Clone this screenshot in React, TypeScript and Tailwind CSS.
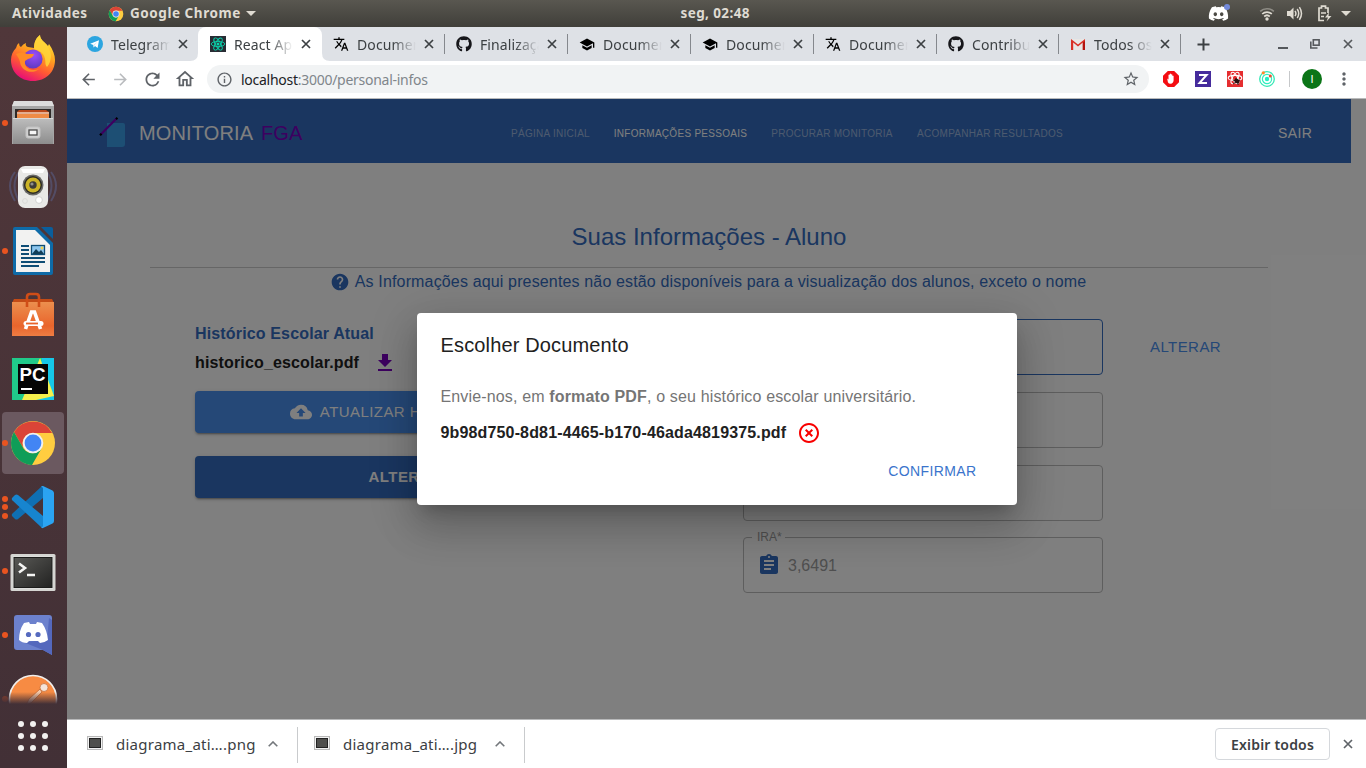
import React from "react";
import {
  MdTranslate,
  MdSchool,
  MdHelp,
  MdCloudUpload,
  MdAssignment,
  MdHighlightOff,
  MdArrowBack,
  MdArrowForward,
  MdRefresh,
  MdOutlineHome,
  MdStarBorder,
  MdOutlineInfo,
  MdMoreVert,
} from "react-icons/md";
import { FaGithub, FaDiscord } from "react-icons/fa";

const ui = "font-['Noto_Sans','Open_Sans',sans-serif]";

function ChromeLogo({ size }: { size: number }) {
  return (
    <svg width={size} height={size} viewBox="0 0 48 48" className="shrink-0">
      <circle cx="24" cy="24" r="22" fill="#ffcd40" />
      <path d="M5 13A22 22 0 0 1 43.1 14H24a11 11 0 0 0-9.5 15.5z" fill="#db4437" />
      <path d="M5 13a22 22 0 0 0 18 33l9.5-16.5a11 11 0 0 1-18 0z" fill="#0f9d58" />
      <circle cx="24" cy="24" r="10.3" fill="#f1f1f1" />
      <circle cx="24" cy="24" r="8.4" fill="#4285f4" />
    </svg>
  );
}

function TelegramIcon() {
  return (
    <svg width="16" height="16" viewBox="0 0 16 16">
      <circle cx="8" cy="8" r="8" fill="#2ca5e0" />
      <path d="M3.2 7.8 12 4.2 10.6 12 8 10.1 6.7 11.4 6.3 9.1z" fill="#fff" />
      <path d="M6.3 9.1 10.2 6 7.2 9.7 6.7 11.4z" fill="#c9e2f2" />
    </svg>
  );
}

function ReactIcon() {
  return (
    <svg width="16" height="16" viewBox="0 0 16 16">
      <rect width="16" height="16" fill="#282c34" />
      <g fill="none" stroke="#09d3ac" strokeWidth="0.9">
        <ellipse cx="8" cy="8" rx="6.8" ry="2.6" />
        <ellipse cx="8" cy="8" rx="6.8" ry="2.6" transform="rotate(60 8 8)" />
        <ellipse cx="8" cy="8" rx="6.8" ry="2.6" transform="rotate(120 8 8)" />
      </g>
      <circle cx="8" cy="8" r="1.5" fill="#09d3ac" />
    </svg>
  );
}

function GmailIcon() {
  return (
    <svg width="16" height="16" viewBox="0 0 16 16">
      <path d="M1 3h14v11H1z" fill="#e8e6e4" />
      <path d="M1 14V3l7 5.6L15 3v11h-2.2V6.6L8 10.4 3.2 6.6V14z" fill="#d93025" />
      <path d="M12.8 6.6 15 5v9h-2.2z" fill="#b3140f" />
    </svg>
  );
}

function Cross({ className }: { className: string }) {
  return (
    <svg width="10" height="10" viewBox="0 0 10 10" className={className}>
      <path d="M1 1l8 8M9 1L1 9" stroke="currentColor" strokeWidth="1.7" />
    </svg>
  );
}

const tabs = [
  { icon: <TelegramIcon />, label: "Telegram" },
  { icon: <ReactIcon />, label: "React App" },
  { icon: <MdTranslate size={16} color="#000" />, label: "Document" },
  { icon: <FaGithub size={16} color="#16161a" />, label: "Finalizaçã" },
  { icon: <MdSchool size={17} color="#000" />, label: "Document" },
  { icon: <MdSchool size={17} color="#000" />, label: "Document" },
  { icon: <MdTranslate size={16} color="#000" />, label: "Document" },
  { icon: <FaGithub size={16} color="#16161a" />, label: "Contribut" },
  { icon: <GmailIcon />, label: "Todos os" },
];

function TopBar() {
  return (
    <header className={`${ui} grid h-[27px] grid-cols-[1fr_auto_1fr] items-center bg-linear-to-b from-[#595750] to-[#403f3a] text-[13.5px] font-bold text-[#dfdbd2]`}>
      <div className="flex items-center pl-3">
        <span className="w-[96px] tracking-[0.45px]">Atividades</span>
        <ChromeLogo size={16} />
        <span className="ml-[6px] w-[112px] whitespace-nowrap tracking-[0.55px]">Google Chrome</span>
        <svg width="10" height="5" viewBox="0 0 10 5" className="ml-1">
          <path d="M0 0h10L5 5z" fill="#dfdbd2" />
        </svg>
      </div>
      <span className="ml-[66px] w-[71px] whitespace-nowrap tracking-[0.4px]">seg, 02:48</span>
      <div className="flex items-center justify-end pr-[15px]">
        <span className="relative mr-[30px] flex h-5 w-[21px] items-center">
          <FaDiscord size={21} color="#fff" />
          <span className="absolute -right-[1px] top-0 size-[6px] rounded-full bg-[#7289da]" />
        </span>
        <svg width="16" height="14" viewBox="0 0 16 14" className="mr-3" fill="none" strokeWidth="1.7">
          <path d="M1.2 4.4a10 10 0 0 1 13.6 0" stroke="#8f8d86" />
          <path d="M3.2 7a7 7 0 0 1 9.6 0M5.2 9.5a4.2 4.2 0 0 1 5.6 0" stroke="#dfdbd2" />
          <circle cx="8" cy="12" r="1.7" fill="#dfdbd2" />
        </svg>
        <svg width="17" height="15" viewBox="0 0 17 15" className="mr-[13px]" fill="none" stroke="#dfdbd2" strokeWidth="1.5">
          <path d="M0 5h3l3.5-3.5v12L3 10H0z" fill="#dfdbd2" stroke="none" />
          <path d="M8 4.8q1.8 2.7 0 5.4M10.2 3q3 4.5 0 9M12.4 1.2q4.2 6.3 0 12.6" />
        </svg>
        <svg width="15" height="17" viewBox="0 0 15 17" className="mr-[9px]" fill="none" stroke="#dfdbd2" strokeWidth="1.7">
          <path d="M7 15.5H2V3h2.5V1.2h4V3H11v5" />
          <path d="M4 8h5M4 11.5h3" />
          <path d="M12 7.5l-4 5h3l-1.5 4 5-5.5h-3z" fill="#dfdbd2" stroke="none" />
        </svg>
        <svg width="10" height="5" viewBox="0 0 10 5">
          <path d="M0 0h10L5 5z" fill="#dfdbd2" />
        </svg>
      </div>
    </header>
  );
}

function Firefox() {
  return (
    <svg width="48" height="48" viewBox="0 0 48 48">
      <defs>
        <linearGradient id="ffBody" x1="0.75" y1="0.05" x2="0.3" y2="1">
          <stop offset="0" stopColor="#ffe83a" />
          <stop offset="0.35" stopColor="#ffa31f" />
          <stop offset="0.65" stopColor="#ff5a33" />
          <stop offset="1" stopColor="#e6087c" />
        </linearGradient>
        <radialGradient id="ffGlobe" cx="0.55" cy="0.3" r="0.7">
          <stop offset="0" stopColor="#9a4dfa" />
          <stop offset="1" stopColor="#5f3ac0" />
        </radialGradient>
      </defs>
      <path d="M7 13q1-4 3-5 0 3 2 4 2-3 5-4-1 3 2 4l6 1C25 7 27 3 31 0c0 5 5 7 8 11l1-2c4 6 6 11 6 16 0 12-9 21-22 21S2 37 2 25c0-5 2-9 5-12z" fill="url(#ffBody)" />
      <path d="M31 0c0 5 5 7 8 12 4 6 4 14-1 20-3-3 0-7-4-13-3-4-9-4-9-6 0-5 2-10 6-13z" fill="#ffd53a" opacity="0.85" />
      <circle cx="24" cy="24" r="9.6" fill="url(#ffGlobe)" />
      <path d="M7 19q6-3 11 0h7q-1 4-6 5l-3 2c-1 7 6 11 14 8-7 6-18 2-19-7-1-4-3-6-4-8z" fill="#ff8b25" />
    </svg>
  );
}

function Files() {
  return (
    <svg width="46" height="48" viewBox="0 0 46 48">
      <defs>
        <linearGradient id="cab" x1="0" y1="0" x2="0" y2="1">
          <stop offset="0" stopColor="#bdbdbd" />
          <stop offset="1" stopColor="#8d8d8d" />
        </linearGradient>
      </defs>
      <path d="M4 2h38l2 5v38H2V7z" fill="#a5a5a5" />
      <path d="M4 2h38l2 5H2z" fill="#dcdcdc" />
      <rect x="5" y="10" width="36" height="9" fill="#2e2a28" />
      <path d="M7 13l2-2h27l3 2v6H7z" fill="#b8481c" />
      <path d="M7 15h32v4H7z" fill="#ee8b46" />
      <path d="M7 14h32" stroke="#fbe7d2" strokeWidth="1.3" />
      <path d="M3 19h40v26H3z" fill="url(#cab)" />
      <path d="M3 19.5h40" stroke="#d8d8d8" />
      <rect x="16" y="28" width="14" height="11" rx="2" fill="#d0d0d0" stroke="#c2c2c2" />
      <rect x="19" y="31" width="8" height="5" fill="#f5f5f5" stroke="#4a4a4a" strokeWidth="1.3" />
    </svg>
  );
}

function Speaker() {
  return (
    <svg width="50" height="48" viewBox="0 0 50 48">
      <g fill="none" stroke="#5a6491" strokeWidth="2" opacity="0.5">
        <path d="M11 9Q2 22 11 38M7 9Q-3 22 7 38M39 9q9 13 0 29M43 9q10 13 0 29" />
      </g>
      <rect x="10" y="3" width="30" height="42" rx="7" fill="#e9e9e7" />
      <path d="M13 6h24l-2 4H15z" fill="#fff" />
      <circle cx="25" cy="22" r="10.5" fill="#6b6b68" />
      <circle cx="25" cy="22" r="9" fill="#2d2c24" />
      <circle cx="25" cy="22" r="7.6" fill="#cbb327" />
      <circle cx="25" cy="22" r="3.7" fill="#3b3b39" />
      <circle cx="24" cy="21" r="1.6" fill="#8f8f8c" />
      <circle cx="31" cy="37" r="3.4" fill="#fff" stroke="#d2d2d0" />
      <circle cx="17" cy="38" r="2.4" fill="none" stroke="#dadad8" />
    </svg>
  );
}

function Writer() {
  return (
    <svg width="42" height="48" viewBox="0 0 42 48">
      <path d="M3 0h22l16 16v30a2 2 0 0 1-2 2H3a2 2 0 0 1-2-2V2a2 2 0 0 1 2-2z" fill="#0e6ba8" />
      <path d="M4 3h19l15 15v27H4z" fill="#f2f2f1" />
      <path d="M29 0h10a2 2 0 0 1 2 2v10z" fill="#0a5e9c" />
      <path d="M9 19h8M9 23h8M9 27h8M9 31h24M9 35h24M9 39h18" stroke="#0e4d75" strokeWidth="2" />
      <rect x="19.5" y="18.5" width="13" height="9" fill="#8cc6ee" stroke="#0e4d75" strokeWidth="1.3" />
      <path d="M20 27l4-5 3 3 2-2 3 4z" fill="#123e58" />
      <circle cx="30" cy="21" r="1.4" fill="#f3d24c" />
    </svg>
  );
}

function Software() {
  return (
    <svg width="44" height="48" viewBox="0 0 44 48">
      <defs>
        <linearGradient id="bag" x1="0" y1="0" x2="0" y2="1">
          <stop offset="0" stopColor="#ec8f4e" />
          <stop offset="0.7" stopColor="#e9652c" />
          <stop offset="1" stopColor="#ee7d43" />
        </linearGradient>
      </defs>
      <path d="M3 8h38l2 4H1z" fill="#c34b16" />
      <path d="M1 11h42v34H1z" fill="url(#bag)" />
      <path d="M16 16V6q0-3 3-3h6q3 0 3 3v10" fill="none" stroke="#d04d17" strokeWidth="2.6" />
      <path d="M14.5 38l6-17h3l6 17" fill="none" stroke="#fff" strokeWidth="3.6" />
      <path d="M15 32.5h15" stroke="#fff" strokeWidth="5" strokeLinecap="round" />
      <path d="M15 32.5h12" stroke="#e9652c" strokeWidth="1.8" />
    </svg>
  );
}

function PyCharm() {
  return (
    <svg width="42" height="42" viewBox="0 0 42 42">
      <rect width="42" height="42" fill="#21d789" />
      <path d="M30 0h12v42H22z" fill="#16c8e8" />
      <path d="M0 32L28 0l14 38-18 4H0z" fill="#f5f04c" />
      <path d="M0 0h28L10 42H0z" fill="#20ca8a" />
      <rect x="6" y="6" width="30" height="30" fill="#050505" />
      <text x="7.5" y="23" fontSize="18.5" fontWeight="700" textLength="26" lengthAdjust="spacingAndGlyphs" fill="#fff" fontFamily="Liberation Sans, sans-serif">PC</text>
      <path d="M9 31h11" stroke="#fff" strokeWidth="2" />
    </svg>
  );
}

function VSCode() {
  return (
    <svg width="44" height="44" viewBox="0 0 44 44">
      <path d="M32 1v12L7 34q-1.500 1-3 0l-2.500-2.500q-1.500-1.500 0-3L30 2z" fill="#0f6fb3" />
      <path d="M1.500 15.500q-1.500-1.500 0-3L4 10q1.500-1 3 0l25 21v12l-2-1z" fill="#1785cf" />
      <path d="M32 1l9.500 4.500q1.500 1 1.500 2.500v28q0 1.500-1.500 2.500L32 43q-1 .5-2-1 2 .5 2-1.500v-37Q32 1.500 30 2q1-1.500 2-1z" fill="#2ba4f2" />
    </svg>
  );
}

function Terminal() {
  return (
    <svg width="46" height="40" viewBox="0 0 46 40" className="mt-[2px]">
      <defs>
        <linearGradient id="term" x1="0" y1="0" x2="1" y2="1">
          <stop offset="0" stopColor="#595956" />
          <stop offset="1" stopColor="#222221" />
        </linearGradient>
      </defs>
      <rect x="0.5" y="2" width="45" height="37" rx="1.5" fill="#d5d5d2" />
      <rect x="3" y="4.5" width="40" height="32" fill="#e8e8e6" />
      <rect x="4" y="5.5" width="38" height="30" fill="url(#term)" stroke="#1c1c1b" />
      <path d="M9 11.500l6 4.500-6 4.500M17 23h8" fill="none" stroke="#f4f4f3" strokeWidth="2.6" />
    </svg>
  );
}

function DiscordDock() {
  return (
    <svg width="40" height="42" viewBox="0 0 40 42">
      <path d="M4 1h32a3 3 0 0 1 3 3v37l-9-5H4a3 3 0 0 1-3-3V4a3 3 0 0 1 3-3z" fill="#6c81cd" />
      <path d="M36 4l3 2v35l-9-5L10 28l24-2z" fill="#5468bd" />
      <path d="M11 9l5-1 1 2h6l1-2 5 1q5 7 6 17-4 3-8 3l-2-2h-9l-2 2q-5 0-8-3 0-10 5-17z" fill="#fff" />
      <circle cx="15.500" cy="20.500" r="2.600" fill="#566abf" />
      <circle cx="25" cy="20.500" r="2.600" fill="#566abf" />
    </svg>
  );
}

function Postman() {
  return (
    <svg width="50" height="50" viewBox="0 0 50 50">
      <circle cx="25" cy="25" r="23.5" fill="#f78b43" stroke="#f0eeec" strokeWidth="1.6" />
      <circle cx="36" cy="13.500" r="4" fill="#f4e3d8" stroke="#c46a34" strokeWidth="0.7" />
      <path d="M32 15L21 25l-3 6 5-2 11-11z" fill="#f6c9a8" stroke="#c46a34" strokeWidth="0.8" />
    </svg>
  );
}

const dockItems = [
  { icon: <Firefox />, dots: 0 },
  { icon: <Files />, dots: 1 },
  { icon: <Speaker />, dots: 0 },
  { icon: <Writer />, dots: 1 },
  { icon: <Software />, dots: 0 },
  { icon: <PyCharm />, dots: 0 },
  { icon: <ChromeLogo size={48} />, dots: 1, active: true },
  { icon: <VSCode />, dots: 3 },
  { icon: <Terminal />, dots: 1 },
  { icon: <DiscordDock />, dots: 1 },
];

function Dots({ count }: { count: number }) {
  return (
    <span className="absolute left-[2px] top-0 flex h-full flex-col items-center justify-center gap-[2.5px]">
      {Array.from({ length: count }, (_, i) => (
        <span key={i} className="size-[6px] rounded-full bg-[#e95420]" />
      ))}
    </span>
  );
}

function Dock() {
  return (
    <aside className="flex w-[67px] shrink-0 flex-col bg-linear-to-b from-[#50373a] to-[#423036]">
      {dockItems.map((item, i) => (
        <div key={i} className="relative flex h-16 shrink-0 items-center pl-[2px]">
          <div className={item.active ? "flex size-[62px] items-center justify-center rounded bg-[#6b5960]" : "flex size-[62px] items-center justify-center"}>
            {item.icon}
          </div>
          <Dots count={item.dots} />
        </div>
      ))}
      <div className="relative h-[37px] shrink-0 overflow-hidden">
        <div className="flex h-16 items-center justify-center pr-[1px]">
          <Postman />
        </div>
        <span className="absolute left-[2px] top-[29px] size-[6px] rounded-full bg-[#8a3f2b]" />
        <div className="absolute inset-x-0 bottom-0 h-3 bg-linear-to-b from-transparent to-[#433037]" />
      </div>
      <div className="grid h-16 grid-cols-3 content-center justify-center gap-[6px] pl-[18px] pr-[19px]">
        {Array.from({ length: 9 }, (_, i) => (
          <span key={i} className="size-[6px] rounded-full bg-[#f2f1f0]" />
        ))}
      </div>
    </aside>
  );
}

function TabStrip() {
  return (
    <div className={`${ui} flex h-[34px] items-stretch bg-[#dee1e6] text-[14px] text-[#3c4043]`}>
      <div className="w-2 shrink-0" />
      {tabs.map((tab, i) => (
        <div
          key={i}
          className={
            i === 1
              ? "relative flex w-[124px] items-center rounded-t-lg bg-white pl-3"
              : i > 6
                ? "relative flex w-[122px] items-center pl-[11px]"
                : i > 1
                  ? "relative flex w-[123px] items-center pl-[11px]"
                  : "relative flex w-[123px] items-center pl-3"
          }
        >
          <span className="flex w-4 shrink-0 items-center justify-center">{tab.icon}</span>
          <span
            className={
              i > 6
                ? "ml-2 w-[58px] overflow-hidden whitespace-nowrap tracking-[0.1px] mask-r-from-60% mask-r-to-100%"
                : "ml-2 w-[59px] overflow-hidden whitespace-nowrap tracking-[0.1px] mask-r-from-60% mask-r-to-100%"
            }
          >
            {tab.label}
          </span>
          <Cross className="ml-2 shrink-0" />
          {i > 1 && <span className="ml-auto h-5 w-px bg-[#85888d]" />}
          {i === 1 && (
            <>
              <svg width="8" height="8" viewBox="0 0 8 8" className="absolute -left-2 bottom-0">
                <path d="M8 0v8H0q8 0 8-8z" fill="#fff" />
              </svg>
              <svg width="8" height="8" viewBox="0 0 8 8" className="absolute -right-2 bottom-0">
                <path d="M0 0v8h8Q0 8 0 0z" fill="#fff" />
              </svg>
            </>
          )}
        </div>
      ))}
      <svg width="13" height="13" viewBox="0 0 13 13" className="ml-4 self-center">
        <path d="M6.5 0.5v12M0.5 6.5h12" stroke="#3c4043" strokeWidth="2" />
      </svg>
      <div className="ml-auto flex items-center pr-[13px]">
        <svg width="10" height="10" viewBox="0 0 10 10" className="mr-[22px]">
          <path d="M0 9h10" stroke="#55585c" strokeWidth="2" />
        </svg>
        <svg width="10" height="10" viewBox="0 0 10 10" className="mr-[23px]" fill="none" stroke="#55585c" strokeWidth="1.6">
          <rect x="3.3" y="0.8" width="5.8" height="5.4" />
          <path d="M0.8 2.5V9h6.7" />
        </svg>
        <Cross className="text-[#55585c]" />
      </div>
    </div>
  );
}

function Toolbar() {
  return (
    <div className={`${ui} flex h-[38px] items-center border-b border-[#b8b9ba] bg-white pb-px pl-3 text-[#5f6368]`}>
      <MdArrowBack size={19} className="mr-[13px]" />
      <MdArrowForward size={19} className="mr-[12px] text-[#b9bbbe]" />
      <MdRefresh size={21} className="mr-[11px]" />
      <MdOutlineHome size={22} className="mr-[11px]" />
      <div className="flex h-7 w-[942px] items-center rounded-full bg-[#f1f3f4] pl-[9px] pr-[9px]">
        <MdOutlineInfo size={17} />
        <span className="ml-[8px] text-[14px] tracking-[-0.27px] text-[#80868b]">
          <span className="text-[#202124]">localhost</span>:3000/personal-infos
        </span>
        <MdStarBorder size={18} className="ml-auto" />
      </div>
      <svg width="16" height="16" viewBox="0 0 16 16" className="ml-[14px]">
        <path d="M4.8 0h6.4L16 4.8v6.4L11.2 16H4.8L0 11.2V4.8z" fill="#f40d12" />
        <path d="M4.2 7.5l1.3 1V4q.6-.9 1.2 0V3q.6-.9 1.3 0v.6q.7-.9 1.3 0V5q.6-.8 1.3 0v4.5q-.3 3-3 3.3-2 0-2.7-1.6z" fill="#fff" />
      </svg>
      <svg width="16" height="16" viewBox="0 0 16 16" className="ml-4">
        <rect width="16" height="16" fill="#452b9c" />
        <path d="M4 4h7.6L4.5 12H12" fill="none" stroke="#fff" strokeWidth="2" />
      </svg>
      <svg width="16" height="16" viewBox="0 0 16 16" className="ml-4">
        <rect width="16" height="16" fill="#e52d2f" />
        <g fill="none" stroke="#fff" strokeWidth="1.1">
          <ellipse cx="8" cy="7" rx="6.8" ry="2.6" />
          <ellipse cx="8" cy="7" rx="6.4" ry="2.6" transform="rotate(60 8 7)" />
          <ellipse cx="8" cy="7" rx="6.4" ry="2.6" transform="rotate(120 8 7)" />
        </g>
        <ellipse cx="10" cy="10" rx="2.8" ry="2.2" fill="#2b1110" transform="rotate(35 10 10)" />
        <path d="M6 9l3 1M6 13l3-2M9 7v3M13 9l-2 1M11 14v-2" stroke="#2b1110" />
      </svg>
      <svg width="16" height="16" viewBox="0 0 16 16" className="ml-4" fill="none">
        <circle cx="8" cy="8" r="7.3" stroke="#36e8b5" strokeWidth="1.3" />
        <circle cx="8" cy="8" r="4.6" stroke="#2ff0c0" strokeWidth="1.2" />
        <circle cx="8" cy="8" r="2.2" fill="#22eec0" />
        <circle cx="4.3" cy="1.8" r="1.6" fill="#ff8a2a" />
        <circle cx="11.3" cy="5" r="1.5" fill="#f24a2d" />
      </svg>
      <span className="ml-[14px] h-4 w-px bg-[#c6c8ca]" />
      <span className="ml-3 flex size-5 items-center justify-center rounded-full bg-[#0b7517] font-['Liberation_Sans',sans-serif] text-[11px] text-white">I</span>
      <MdMoreVert size={20} className="ml-[12px]" />
    </div>
  );
}

const navItems = [
  { label: "PÁGINA INICIAL", cls: "w-[103px] text-white/50" },
  { label: "INFORMAÇÕES PESSOAIS", cls: "w-[157px] border-[#7a00c0] text-white" },
  { label: "PROCURAR MONITORIA", cls: "w-[146px] text-white/50" },
  { label: "ACOMPANHAR RESULTADOS", cls: "w-[170px] text-white/50" },
];

function NavBar() {
  return (
    <nav className="flex h-16 w-[1284px] items-center bg-[#346cc0] pl-[31px] pt-1 text-white">
      <svg width="32" height="34" viewBox="0 0 32 34" className="shrink-0">
        <path d="M9 7h16q2 0 2 2v19q0 3-3 3H9z" fill="#3a9fe8" />
        <path d="M2.500 18.800L18.500 2.500" stroke="#7a00c0" strokeWidth="2.200" />
        <path d="M2 19.300l1.600-1.600M18 3.200l1.400-1.400" stroke="#000" strokeWidth="2.2" />
      </svg>
      <div className="ml-[9px] w-[171px] whitespace-nowrap text-[20px] tracking-[0.15px]">
        MONITORIA <span className="ml-[3px] text-[#7a00c0]">FGA</span>
      </div>
      <div className="ml-[189px] flex h-12">
        {navItems.map((item) => (
          <div key={item.label} className={`flex items-center justify-center whitespace-nowrap border-b-2 border-transparent pt-[2px] text-[10px] tracking-[0.28px] ${item.cls}`}>
            {item.label}
          </div>
        ))}
      </div>
      <div className="ml-[203px] text-[14px] tracking-[0.4px]">SAIR</div>
    </nav>
  );
}

function Page() {
  return (
    <div className="h-[620px] bg-white">
      <NavBar />
      <main className="w-[1284px] px-[83px]">
        <h1 className="flex h-[104px] items-center justify-center pt-[44px] text-[24px] text-[#346cc0]">Suas Informações - Aluno</h1>
        <div className="flex h-[29px] items-center justify-center border-t border-[#cccccc] pr-[2px] text-[16px] tracking-[0.15px] text-[#346cc0]">
          <MdHelp size={20} className="mr-[5px]" />
          As Informações aqui presentes não estão disponíveis para a visualização dos alunos, exceto o nome
        </div>
        <div className="flex pl-[45px] pt-[23px]">
          <div className="w-[480px] text-[16px] font-bold tracking-[0.15px] text-[#212121]">
            <div className="flex h-[29px] items-center text-[#346cc0]">Histórico Escolar Atual</div>
            <div className="flex h-[30px] items-center">
              historico_escolar.pdf
              <svg width="24" height="24" viewBox="0 0 24 24" className="ml-[14px]">
                <path d="M19 9h-4V3H9v6H5l7 7 7-7zM5 18v2h14v-2H5z" fill="#7a00c0" />
              </svg>
            </div>
            <div className="mt-[13px] flex h-[42px] items-center justify-center whitespace-nowrap rounded bg-[#4a90ee] pr-1 text-[15px] font-normal tracking-[0.43px] text-white shadow-[0_3px_1px_-2px_rgba(0,0,0,.2),0_2px_2px_0_rgba(0,0,0,.14),0_1px_5px_0_rgba(0,0,0,.12)]">
              <MdCloudUpload size={22} className="mr-2" />
              ATUALIZAR HISTÓRICO ESCOLAR
            </div>
            <div className="mt-[23px] flex h-[42px] items-center justify-center rounded bg-[#346cc0] text-[15px] tracking-[0.43px] text-white shadow-[0_3px_1px_-2px_rgba(0,0,0,.2),0_2px_2px_0_rgba(0,0,0,.14),0_1px_5px_0_rgba(0,0,0,.12)]">
              ALTERAR SENHA
            </div>
          </div>
          <div className="ml-[68px] flex w-[360px] flex-col gap-[17px]">
            <div className="h-14 rounded border border-[#346cc0]" />
            <div className="h-14 rounded border border-[#bdbdbd]" />
            <div className="h-14 rounded border border-[#bdbdbd]" />
            <fieldset className="-mt-[7px] h-[62px] rounded border border-[#bdbdbd] px-[7px] text-[#9e9e9e]">
              <legend className="ml-[1px] flex h-3 w-[33px] items-center px-[5px] text-[12px] leading-3">IRA*</legend>
              <div className="flex h-[44px] items-center pl-[6px] text-[16px]">
                <MdAssignment size={24} className="mr-[7px] text-[#346cc0]" />
                <span className="pt-[2px]">3,6491</span>
              </div>
            </fieldset>
          </div>
          <div className="ml-[47px] flex h-14 items-center text-[15px] tracking-[0.43px] text-[#4a90ee]">ALTERAR</div>
        </div>
      </main>
    </div>
  );
}

function Dialog() {
  return (
    <div className="absolute inset-0 flex items-center justify-center bg-black/50">
      <div className="h-[192px] w-[600px] rounded bg-white px-6 text-[16px] tracking-[0.15px] shadow-[0_11px_15px_-7px_rgba(0,0,0,.2),0_24px_38px_3px_rgba(0,0,0,.14),0_9px_46px_8px_rgba(0,0,0,.12)]">
        <h2 className="flex h-[64px] items-center text-[20px] text-[#212121]">Escolher Documento</h2>
        <p className="flex h-[38px] items-center whitespace-pre pt-[2px] text-[#757575]">
          Envie-nos, em <b>formato PDF</b>, o seu histórico escolar universitário.
        </p>
        <div className="flex h-[36px] items-center font-bold text-[#212121]">
          9b98d750-8d81-4465-b170-46ada4819375.pdf
          <MdHighlightOff size={24} color="#f80000" className="ml-[11px]" />
        </div>
        <div className="flex h-10 items-center justify-end pr-4 text-[14px] tracking-[0.4px] text-[#3a74cc]">CONFIRMAR</div>
      </div>
    </div>
  );
}

function DownloadItem({ name }: { name: string }) {
  return (
    <div className="mt-[1px] flex h-9 items-center border-r border-[#c9cbcd] pl-5 pr-[18px]">
      <svg width="16" height="14" viewBox="0 0 16 14" className="-mt-[3px] mr-[13px]">
        <rect x="0.5" y="0.5" width="15" height="13" fill="#f2f2f2" stroke="#b9b9b9" />
        <rect x="2.5" y="2.5" width="11" height="9" fill="#4f4f4d" stroke="#222" />
      </svg>
      <span className="w-[149px] whitespace-nowrap">{name}</span>
      <svg width="10" height="6" viewBox="0 0 10 6" className="-mt-[2px] mr-px ml-[3px]">
        <path d="M0.7 5.3L5 1l4.3 4.3" fill="none" stroke="#73777b" strokeWidth="1.6" />
      </svg>
    </div>
  );
}

function DownloadBar() {
  return (
    <footer className={`${ui} flex h-[49px] items-center border-t border-[#b8b9ba] bg-white text-[15px] tracking-[0.25px] text-[#3c4043]`}>
      <div className="flex">
        <DownloadItem name="diagrama_ati….png" />
        <div className="-ml-[4px] flex">
          <DownloadItem name="diagrama_ati….jpg" />
        </div>
      </div>
      <div className="ml-auto mr-[13px] flex h-8 w-[115px] items-center justify-center rounded border border-[#d5d8dc] text-[14px] font-semibold tracking-[0.2px]">Exibir todos</div>
      <Cross className="mr-[13px] text-[#5f6368]" />
    </footer>
  );
}

export default function App() {
  return (
    <div className="flex h-[768px] w-[1366px] flex-col overflow-hidden font-['Liberation_Sans',sans-serif]">
      <TopBar />
      <div className="flex min-h-0 flex-1">
        <Dock />
        <div className="flex w-[1299px] flex-col">
          <TabStrip />
          <Toolbar />
          <section className="relative h-[620px] shrink-0 overflow-hidden">
            <Page />
            <Dialog />
          </section>
          <DownloadBar />
        </div>
      </div>
    </div>
  );
}
